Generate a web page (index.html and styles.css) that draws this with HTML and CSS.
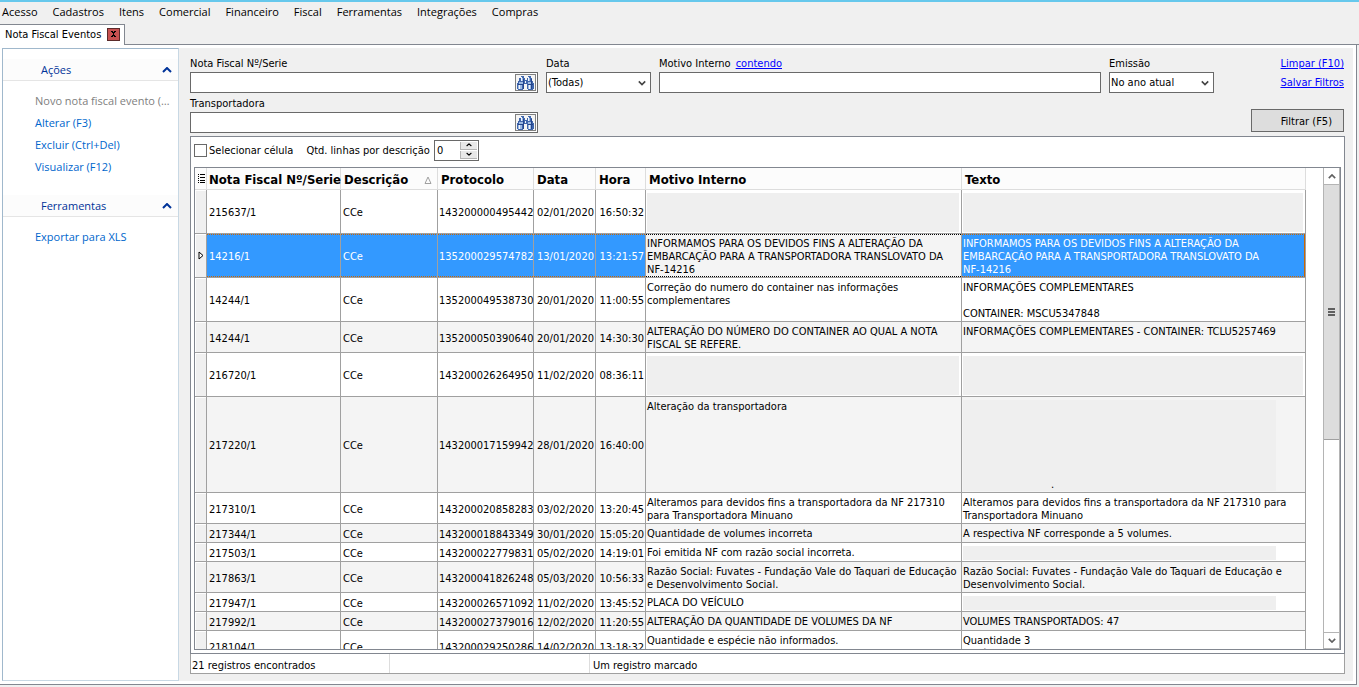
FILE: index.html
```html
<!DOCTYPE html>
<html lang="pt-BR">
<head>
    <meta charset="utf-8">
    <title>Nota Fiscal Eventos</title>
    <link rel="stylesheet" href="styles.css">
</head>
<body>
    <svg width="0" height="0" class="sprites">
        <symbol id="binoculo" viewBox="0 0 17 14">
            <path d="M4 0h3v2h1v2h2V2h1V0h3v2h1v3h1v2h1v6h-1v1h-5v-1h-1V8H7v5H6v1H1v-1H0V7h1V5h1V2h2z" fill="#3f66ad"/>
            <path d="M4 2h2v3H4zM2 6h4v2H2zM1 9h4v4H1zM11 2h2v3h-2zM11 6h4v2h-4zM11 9h4v4h-4z" fill="#9db9e2"/>
            <path d="M4 1h1v4H4zM2 8h1v5H2zM11 1h1v4h-1zM12 8h1v5h-1zM8 5h1v2H8z" fill="#f2f6fc"/>
            <path d="M6 3h1v10H6zM14 3h1v10h-1zM1 8h5v1H1zM11 8h5v1h-5z" fill="#24458c"/>
        </symbol>
        <symbol id="seta" viewBox="0 0 10 6">
            <path d="M1 1l4 4 4-4" fill="none" stroke="currentColor" stroke-width="2"/>
        </symbol>
    </svg>

    <nav class="menu">
        <a href="#">Acesso</a>
        <a href="#">Cadastros</a>
        <a href="#">Itens</a>
        <a href="#">Comercial</a>
        <a href="#">Financeiro</a>
        <a href="#">Fiscal</a>
        <a href="#">Ferramentas</a>
        <a href="#">Integrações</a>
        <a href="#">Compras</a>
    </nav>

    <div class="abas">
        <div class="aba">
            <span>Nota Fiscal Eventos</span>
            <button class="fechar" aria-label="Fechar"><svg width="5" height="6" viewBox="0 0 5 6"><path d="M0 0h2v1h1V0h2v1H4v1H3v2h1v1h1v1H3V5H2v1H0V5h1V4h1V2H1V1H0z" fill="#000"/></svg></button>
        </div>
    </div>

    <div class="pagina">
        <aside class="lateral">
            <div class="grupo">
                <h2>Ações <svg width="10" height="6" class="cima"><use href="#seta"/></svg></h2>
                <a href="#" class="inativo">Novo nota fiscal evento (Ins)</a>
                <a href="#">Alterar (F3)</a>
                <a href="#">Excluir (Ctrl+Del)</a>
                <a href="#">Visualizar (F12)</a>
            </div>
            <div class="grupo">
                <h2>Ferramentas <svg width="10" height="6" class="cima"><use href="#seta"/></svg></h2>
                <a href="#">Exportar para XLS</a>
            </div>
        </aside>

        <main class="conteudo">
            <form class="filtros">
                <div class="campos">
                    <div class="campo nota">
                        <label for="nota">Nota Fiscal Nº/Serie</label>
                        <div class="caixa"><input type="text" id="nota"><button type="button" class="busca" aria-label="Buscar nota fiscal"><svg width="17" height="14"><use href="#binoculo"/></svg></button></div>
                    </div>
                    <div class="campo curto">
                        <label for="data">Data</label>
                        <div class="caixa"><select id="data"><option>(Todas)</option></select><svg width="8" height="6" class="chevron"><use href="#seta"/></svg></div>
                    </div>
                    <div class="campo motivo">
                        <div class="rotulos"><label for="motivo">Motivo Interno</label><a href="#">contendo</a></div>
                        <div class="caixa"><input type="text" id="motivo"></div>
                    </div>
                    <div class="campo curto">
                        <label for="emissao">Emissão</label>
                        <div class="caixa"><select id="emissao"><option>No ano atual</option></select><svg width="8" height="6" class="chevron"><use href="#seta"/></svg></div>
                    </div>
                    <div class="campo nota">
                        <label for="transportadora">Transportadora</label>
                        <div class="caixa"><input type="text" id="transportadora"><button type="button" class="busca" aria-label="Buscar transportadora"><svg width="17" height="14"><use href="#binoculo"/></svg></button></div>
                    </div>
                </div>
                <div class="comandos">
                    <a href="#">Limpar (F10)</a>
                    <a href="#">Salvar Filtros</a>
                    <button type="button" class="filtrar">Filtrar (F5)</button>
                </div>
            </form>

            <section class="painel">
                <div class="opcoes">
                    <input type="checkbox" id="celula"><label for="celula">Selecionar célula</label>
                    <label for="linhas" class="qtd">Qtd. linhas por descrição</label>
                    <div class="numero">
                        <input type="text" id="linhas" value="0">
                        <div class="passos">
                            <button aria-label="Aumentar"><svg width="6" height="4" viewBox="0 0 10 6" class="cima"><use href="#seta"/></svg></button>
                            <button aria-label="Diminuir"><svg width="6" height="4" viewBox="0 0 10 6"><use href="#seta"/></svg></button>
                        </div>
                    </div>
                </div>

                <div class="grade">
                    <div class="linhas">
                        <table>
                            <colgroup>
                                <col class="c-ind"><col class="c-nota"><col class="c-desc"><col class="c-prot"><col class="c-data"><col class="c-hora"><col class="c-motivo"><col class="c-texto">
                            </colgroup>
                            <thead>
                                <tr>
                                    <th class="ind"><svg width="7" height="9" viewBox="0 0 7 9"><path d="M0 0h1v1H0zM2 0h5v1H2zM0 2h1v1H0zM2 3h5v1H2zM0 4h1v1H0zM2 6h5v1H2zM0 6h1v1H0zM2 8h5v1H2zM0 8h1v1H0z"/></svg></th>
                                    <th>Nota Fiscal Nº/Serie</th>
                                    <th><div class="ordem">Descrição <svg width="8" height="8"><path d="M4 1L7 7.500H1z" fill="none" stroke="#a0a0a0"/></svg></div></th>
                                    <th>Protocolo</th>
                                    <th>Data</th>
                                    <th>Hora</th>
                                    <th>Motivo Interno</th>
                                    <th>Texto</th>
                                </tr>
                            </thead>
                            <tbody>
                                <tr>
                                    <td class="ind"></td><td>215637/1</td><td>CCe</td><td class="dir">143200000495442</td><td class="dir">02/01/2020</td><td class="dir">16:50:32</td>
                                    <td class="memo"><div class="vazio l3"></div></td>
                                    <td class="memo"><div class="vazio l3"></div></td>
                                </tr>
                                <tr class="marcada">
                                    <td class="ind"><svg width="6" height="9" viewBox="0 0 6 9"><path d="M1 1l4 3.500-4 3.500z" fill="#fff" stroke="#000"/></svg></td><td>14216/1</td><td>CCe</td><td class="dir">135200029574782</td><td class="dir">13/01/2020</td><td class="dir">13:21:57</td>
                                    <td class="memo foco">INFORMAMOS PARA OS DEVIDOS FINS A ALTERAÇÃO DA<br>EMBARCAÇÃO PARA A TRANSPORTADORA TRANSLOVATO DA<br>NF-14216</td>
                                    <td class="memo">INFORMAMOS PARA OS DEVIDOS FINS A ALTERAÇÃO DA<br>EMBARCAÇÃO PARA A TRANSPORTADORA TRANSLOVATO DA<br>NF-14216</td>
                                </tr>
                                <tr>
                                    <td class="ind"></td><td>14244/1</td><td>CCe</td><td class="dir">135200049538730</td><td class="dir">20/01/2020</td><td class="dir">11:00:55</td>
                                    <td class="memo">Correção do numero do container nas informações<br>complementares</td>
                                    <td class="memo">INFORMAÇÕES COMPLEMENTARES<br><br>CONTAINER: MSCU5347848</td>
                                </tr>
                                <tr>
                                    <td class="ind"></td><td>14244/1</td><td>CCe</td><td class="dir">135200050390640</td><td class="dir">20/01/2020</td><td class="dir">14:30:30</td>
                                    <td class="memo">ALTERAÇÃO DO NÚMERO DO CONTAINER AO QUAL A NOTA<br>FISCAL SE REFERE.</td>
                                    <td class="memo">INFORMAÇÕES COMPLEMENTARES - CONTAINER: TCLU5257469</td>
                                </tr>
                                <tr>
                                    <td class="ind"></td><td>216720/1</td><td>CCe</td><td class="dir">143200026264950</td><td class="dir">11/02/2020</td><td class="dir">08:36:11</td>
                                    <td class="memo"><div class="vazio l3"></div></td>
                                    <td class="memo"><div class="vazio l3"></div></td>
                                </tr>
                                <tr>
                                    <td class="ind"></td><td>217220/1</td><td>CCe</td><td class="dir">143200017159942</td><td class="dir">28/01/2020</td><td class="dir">16:40:00</td>
                                    <td class="memo">Alteração da transportadora</td>
                                    <td class="memo"><div class="vazio l7">.</div></td>
                                </tr>
                                <tr>
                                    <td class="ind"></td><td>217310/1</td><td>CCe</td><td class="dir">143200020858283</td><td class="dir">03/02/2020</td><td class="dir">13:20:45</td>
                                    <td class="memo">Alteramos para devidos fins a transportadora da NF 217310<br>para Transportadora Minuano</td>
                                    <td class="memo">Alteramos para devidos fins a transportadora da NF 217310 para<br>Transportadora Minuano</td>
                                </tr>
                                <tr>
                                    <td class="ind"></td><td>217344/1</td><td>CCe</td><td class="dir">143200018843349</td><td class="dir">30/01/2020</td><td class="dir">15:05:20</td>
                                    <td class="memo">Quantidade de volumes incorreta</td>
                                    <td class="memo">A respectiva NF corresponde a 5 volumes.</td>
                                </tr>
                                <tr>
                                    <td class="ind"></td><td>217503/1</td><td>CCe</td><td class="dir">143200022779831</td><td class="dir">05/02/2020</td><td class="dir">14:19:01</td>
                                    <td class="memo">Foi emitida NF com razão social incorreta.</td>
                                    <td class="memo"><div class="vazio l1"></div></td>
                                </tr>
                                <tr>
                                    <td class="ind"></td><td>217863/1</td><td>CCe</td><td class="dir">143200041826248</td><td class="dir">05/03/2020</td><td class="dir">10:56:33</td>
                                    <td class="memo">Razão Social: Fuvates - Fundação Vale do Taquari de Educação<br>e Desenvolvimento Social.</td>
                                    <td class="memo">Razão Social: Fuvates - Fundação Vale do Taquari de Educação e<br>Desenvolvimento Social.</td>
                                </tr>
                                <tr>
                                    <td class="ind"></td><td>217947/1</td><td>CCe</td><td class="dir">143200026571092</td><td class="dir">11/02/2020</td><td class="dir">13:45:52</td>
                                    <td class="memo">PLACA DO VEÍCULO</td>
                                    <td class="memo"><div class="vazio l1"></div></td>
                                </tr>
                                <tr>
                                    <td class="ind"></td><td>217992/1</td><td>CCe</td><td class="dir">143200027379016</td><td class="dir">12/02/2020</td><td class="dir">11:20:55</td>
                                    <td class="memo">ALTERAÇÃO DA QUANTIDADE DE VOLUMES DA NF</td>
                                    <td class="memo">VOLUMES TRANSPORTADOS: 47</td>
                                </tr>
                                <tr>
                                    <td class="ind"></td><td>218104/1</td><td>CCe</td><td class="dir">143200029250286</td><td class="dir">14/02/2020</td><td class="dir">13:18:32</td>
                                    <td class="memo">Quantidade e espécie não informados.</td>
                                    <td class="memo">Quantidade 3<br>Espécie</td>
                                </tr>
                            </tbody>
                        </table>
                    </div>
                    <div class="rolagem">
                        <button aria-label="Subir"><svg width="8" height="5" viewBox="0 0 10 6" class="cima"><use href="#seta"/></svg></button>
                        <div class="trilho"><div class="cursor"><i></i><i></i><i></i></div></div>
                        <button aria-label="Descer"><svg width="8" height="5" viewBox="0 0 10 6"><use href="#seta"/></svg></button>
                    </div>
                </div>
            </section>

            <footer class="status">
                <span class="fixo">21 registros encontrados</span>
                <span class="fixo"></span>
                <span>Um registro marcado</span>
            </footer>
        </main>
    </div>
</body>
</html>
```

FILE: styles.css
```css
* {
    box-sizing: border-box;
}
body {
    margin: 0;
    height: 100vh;
    display: flex;
    flex-direction: column;
    background-color: #f0f0f0;
    border-top: 2px solid #66c8ec;
    font: 11px/13px "DejaVu Sans Condensed", "Noto Sans", sans-serif;
    color: #000000;
    overflow: hidden;
}
input, select, button {
    font: inherit;
    color: inherit;
    margin: 0;
    padding: 0;
    border: 0;
    border-radius: 0;
    background: none;
    appearance: none;
}
svg {
    display: block;
    flex: none;
}
.sprites {
    position: absolute;
}
.cima {
    transform: rotate(180deg);
}

/* menu e abas */
.menu {
    display: flex;
    gap: 15px;
    height: 22px;
    padding: 0 2px 2px;
    align-items: center;
    font: 11px/16px "Open Sans", "Noto Sans", sans-serif;
}
.menu a {
    color: #000000;
    text-decoration: none;
}
.abas {
    display: flex;
    height: 21px;
    border-bottom: 1px solid #828790;
}
.aba {
    display: flex;
    align-items: center;
    gap: 6px;
    height: 21px;
    width: 125px;
    padding: 0 0 2px 5px;
    background-color: #ffffff;
    border-top: 1px solid #828790;
    border-right: 1px solid #828790;
    white-space: nowrap;
}
.fechar {
    display: flex;
    align-items: center;
    justify-content: center;
    width: 13px;
    height: 13px;
    background-color: #c75050;
    border: 1px solid #5a2a2a;
}
.pagina {
    flex: 1;
    min-height: 0;
    display: flex;
    margin: 0 2px 2px 0;
    padding: 3px 3px 3px 2px;
    background-color: #ffffff;
    border-right: 1px solid #828790;
    border-bottom: 1px solid #828790;
}

/* barra lateral */
.lateral {
    flex: none;
    width: 177px;
    padding-top: 10px;
    background-color: #ffffff;
    border: 1px solid #a0b8cc;
    border-right-color: #c8d8e4;
    border-bottom-color: #c8d8e4;
    font: 11px/22px "Open Sans", "Noto Sans", sans-serif;
}
.grupo {
    margin-bottom: 17px;
}
.grupo h2 {
    display: flex;
    align-items: center;
    justify-content: space-between;
    height: 22px;
    margin: 0 0 9px;
    padding: 0 6px 0 38px;
    font: inherit;
    color: #003399;
    background-color: #fcfcfc;
    border-bottom: 1px solid #e5e5e5;
}
.grupo a {
    display: block;
    padding: 0 6px 0 32px;
    color: #0066cc;
    text-decoration: none;
    overflow: hidden;
    white-space: nowrap;
    text-overflow: ellipsis;
}
.grupo a.inativo {
    color: #808080;
}

/* filtros */
.conteudo {
    flex: 1;
    min-width: 0;
    display: flex;
    flex-direction: column;
    padding: 9px 8px 7px 11px;
    background-color: #f0f0f0;
}
.filtros {
    display: flex;
    gap: 37px;
    height: 79px;
}
.campos {
    flex: 1;
    display: grid;
    grid-template-columns: 348px 105px 1fr 105px;
    grid-auto-rows: 40px;
    column-gap: 8px;
}
.campo {
    display: flex;
    flex-direction: column;
    gap: 2px;
}
.rotulos {
    display: flex;
    gap: 5px;
}
.filtros a {
    color: #0000ff;
}
.caixa {
    position: relative;
    display: flex;
    align-items: center;
    height: 21px;
    background-color: #ffffff;
    border: 1px solid #696969;
}
.caixa input, .caixa select {
    flex: 1;
    min-width: 0;
    padding: 0 1px;
}
.chevron {
    position: absolute;
    right: 4px;
    color: #444444;
    pointer-events: none;
}
.busca {
    display: flex;
    align-items: center;
    justify-content: center;
    width: 21px;
    height: 17px;
    margin-right: 1px;
    background-color: #f4f4f4;
    border: 1px solid #808080;
}
.comandos {
    display: flex;
    flex-direction: column;
    align-items: flex-end;
    width: 94px;
    padding-right: 1px;
    gap: 6px;
}
.filtrar {
    width: 93px;
    height: 23px;
    margin-top: 14px;
    padding: 1px 11px 0 0;
    text-align: right;
    background-color: #dddddd;
    border: 1px solid #696969;
}

/* painel da grade */
.painel {
    flex: 1;
    min-height: 0;
    display: flex;
    flex-direction: column;
    padding: 0 3px 3px;
    background-color: #ffffff;
    border: 1px solid #828790;
}
.opcoes {
    display: flex;
    align-items: center;
    height: 30px;
    padding-bottom: 4px;
}
.opcoes input[type=checkbox] {
    width: 13px;
    height: 13px;
    margin-right: 2px;
    border: 1px solid #696969;
}
.qtd {
    margin: 0 4px 0 13px;
}
.numero {
    display: flex;
    width: 45px;
    height: 21px;
    padding: 1px;
    border: 1px solid #696969;
}
.numero input {
    flex: 1;
    min-width: 0;
    padding-left: 1px;
}
.passos {
    display: flex;
    flex-direction: column;
    gap: 1px;
    width: 17px;
}
.passos button {
    flex: 1;
    display: flex;
    align-items: center;
    justify-content: center;
    background-color: #e8e8e8;
    border: 1px solid #b4b4b4;
    border-width: 0 0 1px 1px;
}
.grade {
    flex: 1;
    min-height: 0;
    display: flex;
    border: 1px solid #828790;
}
.linhas {
    flex: 1;
    overflow: hidden;
    padding-right: 17px;
}
table {
    width: 100%;
    table-layout: fixed;
    border-collapse: separate;
    border-spacing: 0;
}
.c-ind { width: 12px; }
.c-nota { width: 134px; }
.c-desc { width: 97px; }
.c-prot { width: 96px; }
.c-data { width: 62px; }
.c-hora { width: 50px; }
.c-motivo { width: 316px; }
th {
    height: 22px;
    padding: 2px 0 0 3px;
    text-align: left;
    font: bold 13px/16px "DejaVu Sans Condensed", "Noto Sans", sans-serif;
    white-space: nowrap;
    background-color: #fcfcfc;
    border-right: 1px solid #dddddd;
    border-bottom: 1px solid #dddddd;
}
th:nth-child(2) {
    padding-left: 2px;
}
.ordem {
    display: flex;
    align-items: center;
    justify-content: space-between;
    padding-right: 5px;
}
td {
    height: 19px;
    padding: 3px 1px 1px 2px;
    white-space: nowrap;
    border-right: 1px solid #a0a0a0;
    border-bottom: 1px solid #a0a0a0;
}
tbody tr:nth-child(even) td {
    background-color: #f4f4f4;
}
.dir {
    padding-left: 1px;
    text-align: right;
}
.memo {
    padding-left: 1px;
    vertical-align: top;
}
th.ind, td.ind {
    padding: 0 0 0 3px;
}
tbody tr td.ind {
    background-color: #f0f0f0;
    box-shadow: inset 1px 1px #ffffff;
}
/* linha selecionada com contorno pontilhado */
.marcada td:not(.ind) {
    color: #ffffff;
    background: linear-gradient(90deg, #cc6600 50%, #3399ff 50%) left top / 2px 1px repeat-x,
        linear-gradient(90deg, #cc6600 50%, #3399ff 50%) left bottom / 2px 1px repeat-x,
        #3399ff;
}
.marcada td.foco:not(.ind) {
    color: #000000;
    background: linear-gradient(90deg, #000000 50%, #f4f4f4 50%) left top / 2px 1px repeat-x,
        linear-gradient(90deg, #000000 50%, #f4f4f4 50%) left bottom / 2px 1px repeat-x,
        #f4f4f4;
}
.marcada td:last-child {
    box-shadow: inset -1px 0 #cc6600;
}
.vazio {
    margin-right: 1px;
    background-color: #efefef;
}
.l1 {
    height: 14px;
    margin-right: 28px;
}
.l3 {
    height: 39px;
}
.l7 {
    display: flex;
    align-items: flex-end;
    height: 91px;
    margin-right: 28px;
    padding-left: 88px;
}

/* barra de rolagem */
.rolagem {
    display: flex;
    flex-direction: column;
    width: 17px;
    color: #606060;
    border-left: 1px solid #b4b4b4;
}
.rolagem button {
    display: flex;
    align-items: center;
    justify-content: center;
    height: 17px;
    border: 1px solid #b4b4b4;
    border-width: 0 1px 1px 0;
}
.rolagem button:last-child {
    border-width: 1px 1px 1px 0;
}
.trilho {
    flex: 1;
    border-right: 1px solid #b4b4b4;
}
.cursor {
    display: flex;
    flex-direction: column;
    align-items: center;
    justify-content: center;
    gap: 1px;
    height: 57%;
    background-color: #dddddd;
    border-bottom: 1px solid #a0a0a0;
}
.cursor i {
    width: 7px;
    height: 2px;
    background-color: #606060;
}

.status {
    display: flex;
    height: 20px;
    background-color: #ffffff;
    border: 1px solid #a0a0a0;
    border-top: 0;
    line-height: 23px;
}
.status span {
    padding-left: 3px;
}
.status .fixo {
    width: 199px;
    padding-left: 1px;
    border-right: 1px solid #dddddd;
}
.status .fixo + .fixo {
    width: 200px;
}
```
